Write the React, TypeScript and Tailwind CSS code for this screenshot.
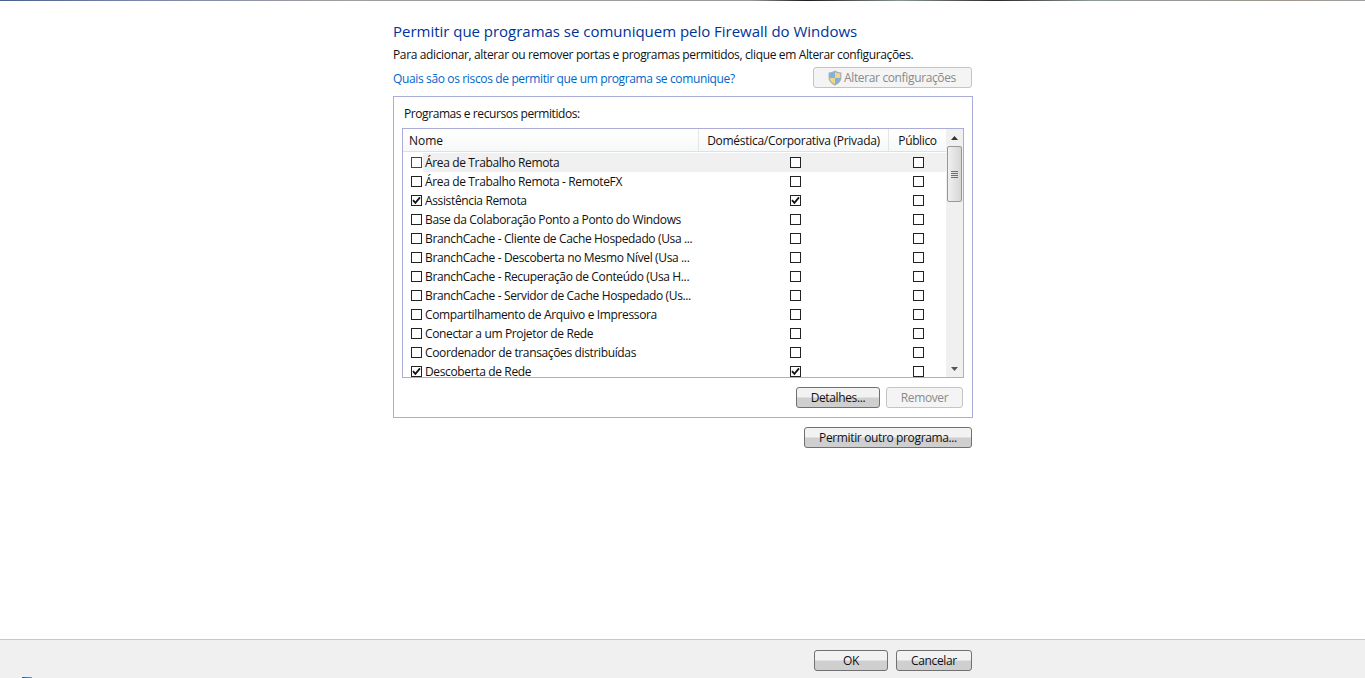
const rows = [
  { name: 'Área de Trabalho Remota', priv: false, pub: false },
  { name: 'Área de Trabalho Remota - RemoteFX', priv: false, pub: false },
  { name: 'Assistência Remota', priv: true, pub: false, on: true },
  { name: 'Base da Colaboração Ponto a Ponto do Windows', priv: false, pub: false },
  { name: 'BranchCache - Cliente de Cache Hospedado (Usa ...', priv: false, pub: false },
  { name: 'BranchCache - Descoberta no Mesmo Nível (Usa ...', priv: false, pub: false },
  { name: 'BranchCache - Recuperação de Conteúdo (Usa H...', priv: false, pub: false },
  { name: 'BranchCache - Servidor de Cache Hospedado (Us...', priv: false, pub: false },
  { name: 'Compartilhamento de Arquivo e Impressora', priv: false, pub: false },
  { name: 'Conectar a um Projetor de Rede', priv: false, pub: false },
  { name: 'Coordenador de transações distribuídas', priv: false, pub: false },
  { name: 'Descoberta de Rede', priv: true, pub: false, on: true },
];

const CheckBox = ({ checked, focused }: { checked?: boolean; focused?: boolean }) => (
  <span
    className={`flex h-[11px] w-[11px] shrink-0 items-center justify-center border bg-white ${
      focused ? 'border-[#1c4f70]' : 'border-[#222222]'
    }`}
  >
    {checked && (
      <svg width="9" height="9" viewBox="0 0 9 9" fill="none">
        <path d="M1 4.2 L3.4 6.8 L8 1.4" stroke="#111111" strokeWidth="1.8" />
      </svg>
    )}
  </span>
);

const WinButton = ({
  label,
  disabled,
  className,
}: {
  label: string;
  disabled?: boolean;
  className: string;
}) => (
  <button
    type="button"
    className={`flex h-[21px] items-center justify-center rounded-[3px] border text-[12px] ${className} ${
      disabled
        ? 'border-[#c4c4c4] bg-[#f4f4f4] text-[#8a8a8a]'
        : 'border-[#707070] bg-gradient-to-b from-[#f2f2f2] from-45% to-[#cfcfcf] to-55% text-[#111111]'
    }`}
  >
    {label}
  </button>
);

const ShieldIcon = () => (
  <svg width="16" height="16" viewBox="0 0 16 16" className="shrink-0">
    <path d="M8 0.6 C6 2 4 2.4 1.6 2.4 V8 C1.6 11.6 5 14.2 8 15.4 C11 14.2 14.4 11.6 14.4 8 V2.4 C12 2.4 10 2 8 0.6 Z" fill="#a7aeb6" />
    <path d="M8 2 C6.4 3 4.6 3.4 2.8 3.5 V8 H8 Z" fill="#7fb0e6" />
    <path d="M8 2 C9.6 3 11.4 3.4 13.2 3.5 V8 H8 Z" fill="#f0d97e" />
    <path d="M2.8 8 H8 V14 C5.4 12.9 2.8 11 2.8 8 Z" fill="#f0d97e" />
    <path d="M13.2 8 H8 V14 C10.6 12.9 13.2 11 13.2 8 Z" fill="#7fb0e6" />
  </svg>
);

export default function App() {
  return (
    <div className="relative flex h-[678px] w-[1365px] flex-col overflow-hidden bg-white font-['Open_Sans','Noto_Sans',sans-serif] text-[12px] tracking-[-0.36px] text-[#111111]">
      <div className="h-[1px] shrink-0 bg-[linear-gradient(90deg,#4a5f8c_0%,#7b85ad_10%,#a0a0a0_25%,#999c98_55%,#1c1c22_59%,#8a9590_66%,#2a2a2a_73%,#909a98_80%,#a09890_95%,#a0a0a0_100%)]" />

      <main className="flex flex-1 flex-col pl-[393px]">
        <h1 className="mt-[20px] h-[20px] text-[15px] leading-[20px] font-normal tracking-[-0.02px] text-[#003399]">
          Permitir que programas se comuniquem pelo Firewall do Windows
        </h1>
        <p className="mt-[6px] h-[16px] leading-[16px]">
          Para adicionar, alterar ou remover portas e programas permitidos, clique em Alterar configurações.
        </p>

        <div className="mt-[4px] flex h-[21px] w-[579px] items-center justify-between">
          <a className="mt-[2px] leading-[16px] text-[#0066cc]">Quais são os riscos de permitir que um programa se comunique?</a>
          <button
            type="button"
            className="flex h-[21px] w-[159px] items-center justify-center gap-[1px] rounded-[3px] border border-[#c4c4c4] bg-[#f4f4f4] pr-[2px] text-[12px] text-[#8a8a8a]"
          >
            <ShieldIcon />
            Alterar configurações
          </button>
        </div>

        <section className="mt-[8px] flex h-[322px] w-[580px] flex-col border border-[#abadd8] pl-[8px]">
          <p className="mt-[9px] h-[16px] pl-[2px] leading-[16px] tracking-[-0.42px]">Programas e recursos permitidos:</p>

          <div className="mt-[6px] flex h-[250px] w-[562px] border border-[#abadd8]">
            <div className="flex min-w-0 flex-1 flex-col">
              <div className="flex h-[23px] shrink-0 border-b border-[#e0e0e0] bg-gradient-to-b from-white to-[#f7f8f9] leading-[23px]">
                <span className="w-[296px] border-r border-[#e3e5e8] pl-[6px] tracking-[0]">Nome</span>
                <span className="w-[190px] border-r border-[#e3e5e8] text-center tracking-[-0.28px]">Doméstica/Corporativa (Privada)</span>
                <span className="flex-1 text-center">Público</span>
              </div>
              <div className="flex flex-col overflow-hidden pt-[1px]">
                {rows.map((row, i) => (
                  <div key={row.name} className="flex h-[19px] shrink-0 items-center">
                    <span className="flex w-[296px] items-center pl-[8px]">
                      <CheckBox checked={row.on} focused={i === 0} />
                      <span className={`ml-[1px] flex-1 truncate pl-[2px] leading-[19px] ${i === 0 ? 'bg-[#f0f0f0]' : ''}`}>
                        {row.name}
                      </span>
                    </span>
                    <span className={`flex h-full w-[190px] items-center justify-center pl-[3px] ${i === 0 ? 'bg-[#f0f0f0]' : ''}`}>
                      <CheckBox checked={row.priv} />
                    </span>
                    <span className={`flex h-full flex-1 items-center justify-center pl-[2px] ${i === 0 ? 'bg-[#f0f0f0]' : ''}`}>
                      <CheckBox checked={row.pub} />
                    </span>
                  </div>
                ))}
              </div>
            </div>

            <div className="flex w-[17px] shrink-0 flex-col items-center bg-[#f0f0f0]">
              <div className="flex h-[17px] shrink-0 items-center justify-center">
                <svg width="7" height="4" viewBox="0 0 7 4"><path d="M3.5 0 L7 4 H0 Z" fill="#333333" /></svg>
              </div>
              <div className="flex h-[56px] w-[15px] shrink-0 items-center justify-center rounded-[2px] border border-[#979797] bg-gradient-to-r from-[#f0f0f0] to-[#d6d6d6]">
                <div className="flex w-[7px] flex-col gap-[1px]">
                  <span className="h-[1px] bg-[#707070]" />
                  <span className="h-[1px] bg-[#707070]" />
                  <span className="h-[1px] bg-[#707070]" />
                  <span className="h-[1px] bg-[#707070]" />
                </div>
              </div>
              <div className="flex-1" />
              <div className="flex h-[17px] shrink-0 items-center justify-center">
                <svg width="7" height="4" viewBox="0 0 7 4"><path d="M3.5 4 L7 0 H0 Z" fill="#555555" /></svg>
              </div>
            </div>
          </div>

          <div className="mt-[9px] flex w-[561px] justify-end gap-[6px]">
            <WinButton label="Detalhes..." className="w-[84px]" />
            <WinButton label="Remover" disabled className="w-[77px]" />
          </div>
        </section>

        <div className="mt-[9px] flex w-[579px] justify-end">
          <WinButton label="Permitir outro programa..." className="w-[168px]" />
        </div>
      </main>

      <footer className="flex h-[39px] shrink-0 justify-end gap-[8px] border-t border-[#c8c8c8] bg-[#f0f0f0] pt-[10px] pr-[393px]">
        <WinButton label="OK" className="w-[74px]" />
        <WinButton label="Cancelar" className="w-[76px]" />
      </footer>

      <span className="absolute bottom-0 left-[22px] h-[1px] w-[10px] bg-gradient-to-r from-[#1f5a86] to-[#6f9ab8]" />
    </div>
  );
}
